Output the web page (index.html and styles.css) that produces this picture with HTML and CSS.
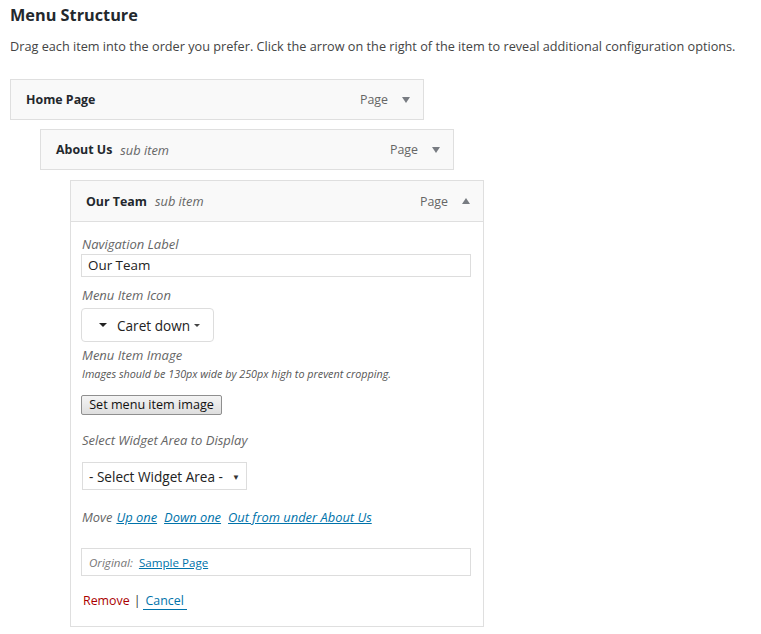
FILE: index.html
```html
<!DOCTYPE html>
<html>
<head>
<meta charset="utf-8">
<link rel="stylesheet" href="styles.css">
</head>
<body>
<div class="page">
  <h2 class="title">Menu Structure</h2>
  <p class="desc">Drag each item into the order you prefer. Click the arrow on the right of the item to reveal additional configuration options.</p>
  <ul class="menu">
    <li class="item depth-0">
      <div class="bar">
        <span class="name">Home Page</span>
        <span class="type">Page</span>
        <span class="arrow down"></span>
      </div>
    </li>
    <li class="item depth-1">
      <div class="bar">
        <span class="name">About Us</span><span class="sub">sub item</span>
        <span class="type">Page</span>
        <span class="arrow down"></span>
      </div>
    </li>
    <li class="item depth-2 open">
      <div class="bar">
        <span class="name">Our Team</span><span class="sub">sub item</span>
        <span class="type">Page</span>
        <span class="arrow up"></span>
      </div>
      <div class="settings">
        <label class="lbl">Navigation Label</label>
        <div class="input">Our Team</div>
        <label class="lbl lbl-icon">Menu Item Icon</label>
        <div class="iconpick"><span class="caret"></span><span class="ic-text">Caret down</span><span class="caret small"></span></div>
        <label class="lbl lbl-img">Menu Item Image</label>
        <p class="hint">Images should be 130px wide by 250px high to prevent cropping.</p>
        <button class="btn">Set menu item image</button>
        <label class="lbl lbl-widget">Select Widget Area to Display</label>
        <div class="select"><span>- Select Widget Area -</span><span class="sel-arrow">&#9660;</span></div>
        <div class="move"><span class="move-lbl">Move</span><a href="#">Up one</a><a href="#">Down one</a><a href="#">Out from under About Us</a></div>
        <div class="original"><span class="orig-lbl">Original:</span><a href="#">Sample Page</a></div>
        <div class="actions"><a href="#" class="remove">Remove</a><span class="sep">|</span><a href="#" class="cancel">Cancel</a></div>
      </div>
    </li>
  </ul>
</div>
</body>
</html>
```

FILE: styles.css
```css
* { box-sizing: border-box; }
body {
  margin: 0;
  background: #fff;
  font-family: "Open Sans", "Noto Sans", sans-serif;
  color: #3c434a;
}
.page { padding: 4px 10px; }
.title {
  margin: 0;
  font-size: 16.3px;
  font-weight: 700;
  color: #23282d;
  line-height: 22px;
}
.desc {
  margin: 10px 0 0;
  font-size: 12.7px;
  line-height: 20px;
  color: #444;
}
.menu {
  list-style: none;
  margin: 23px 0 0;
  padding: 0;
}
.item { width: 414px; margin-bottom: 9px; }
.depth-1 { margin-left: 30px; margin-bottom: 10px; }
.depth-2 { margin-left: 60px; margin-bottom: 0; border: 1px solid #dfdfdf; }
.bar {
  display: flex;
  align-items: center;
  height: 41px;
  padding: 0 13px 0 15px;
  background: #f9f9f9;
  border: 1px solid #dfdfdf;
  font-size: 12.4px;
}
.depth-2 .bar { border: none; border-bottom: 1px solid #dfdfdf; height: 41px; }
.name { font-weight: 700; color: #23282d; }
.sub { font-style: italic; color: #666; margin-left: 8px; font-size: 12.8px; }
.type { margin-left: auto; color: #666; margin-right: 14px; }
.arrow { width: 0; height: 0; border-left: 4.5px solid transparent; border-right: 4.5px solid transparent; }
.arrow.down { border-top: 6px solid #787c82; }
.arrow.up { border-bottom: 6px solid #787c82; }
.settings {
  padding: 14px 12px 16px 10px;
  display: flex;
  flex-direction: column;
  align-items: flex-start;
}
.lbl {
  font-style: italic;
  font-size: 13px;
  color: #666;
  line-height: 16px;
  padding-left: 1px;
}
.input {
  width: 100%;
  height: 23px;
  border: 1px solid #ddd;
  padding: 0 6px;
  font-size: 13.4px;
  line-height: 21px;
  color: #222;
  margin-top: 2px;
}
.lbl-icon { margin-top: 10px; }
.iconpick {
  margin-top: 5px;
  width: 133px;
  height: 34px;
  border: 1px solid #ddd;
  border-radius: 4px;
  display: flex;
  align-items: center;
  padding-left: 17px;
  font-size: 13.6px;
  color: #222;
}
.caret { width: 0; height: 0; border-left: 4px solid transparent; border-right: 4px solid transparent; border-top: 4px solid #222; margin-right: 10px; }
.caret.small { border-left-width: 3.5px; border-right-width: 3.5px; border-top-width: 3.5px; border-top-color: #444; margin: 0 0 0 4px; }
.lbl-img { margin-top: 5px; }
.hint {
  margin: 4px 0 0 1px;
  font-size: 10.8px;
  font-style: italic;
  color: #555;
  line-height: 14px;
}
.btn {
  margin-top: 14px;
  width: 141px;
  height: 20px;
  padding: 0;
  border: 1px solid #8f8f8f;
  border-radius: 2px;
  background: linear-gradient(#f4f4f4, #dedede);
  font-family: inherit;
  font-size: 12.6px;
  color: #111;
  line-height: 18px;
}
.lbl-widget { margin-top: 17px; }
.select {
  margin-top: 14px;
  margin-left: 1px;
  width: 165px;
  height: 28px;
  border: 1px solid #ddd;
  display: flex;
  align-items: center;
  padding: 0 6px;
  font-size: 13.6px;
  color: #222;
}
.sel-arrow { margin-left: auto; font-size: 8px; color: #333; }
.move {
  margin-top: 19px;
  font-size: 12.9px;
  font-style: italic;
  line-height: 16px;
  padding-left: 1px;
}
.move-lbl { color: #666; margin-right: 4px; }
.move a { color: #0073aa; margin-right: 7px; }
.original {
  margin-top: 23px;
  width: 100%;
  height: 28px;
  border: 1px solid #ddd;
  display: flex;
  align-items: center;
  padding: 0 7px;
  font-size: 11.6px;
}
.orig-lbl { font-style: italic; color: #777; margin-right: 6px; }
.original a { color: #0073aa; }
.actions {
  margin-top: 16px;
  font-size: 12.4px;
  line-height: 18px;
  padding-left: 2px;
}
.remove { color: #a00; text-decoration: none; }
.sep { color: #333; margin: 0 2px 0 4px; }
.cancel { color: #0073aa; text-decoration: none; border-bottom: 1px solid #0073aa; padding: 0 3px; }
```
